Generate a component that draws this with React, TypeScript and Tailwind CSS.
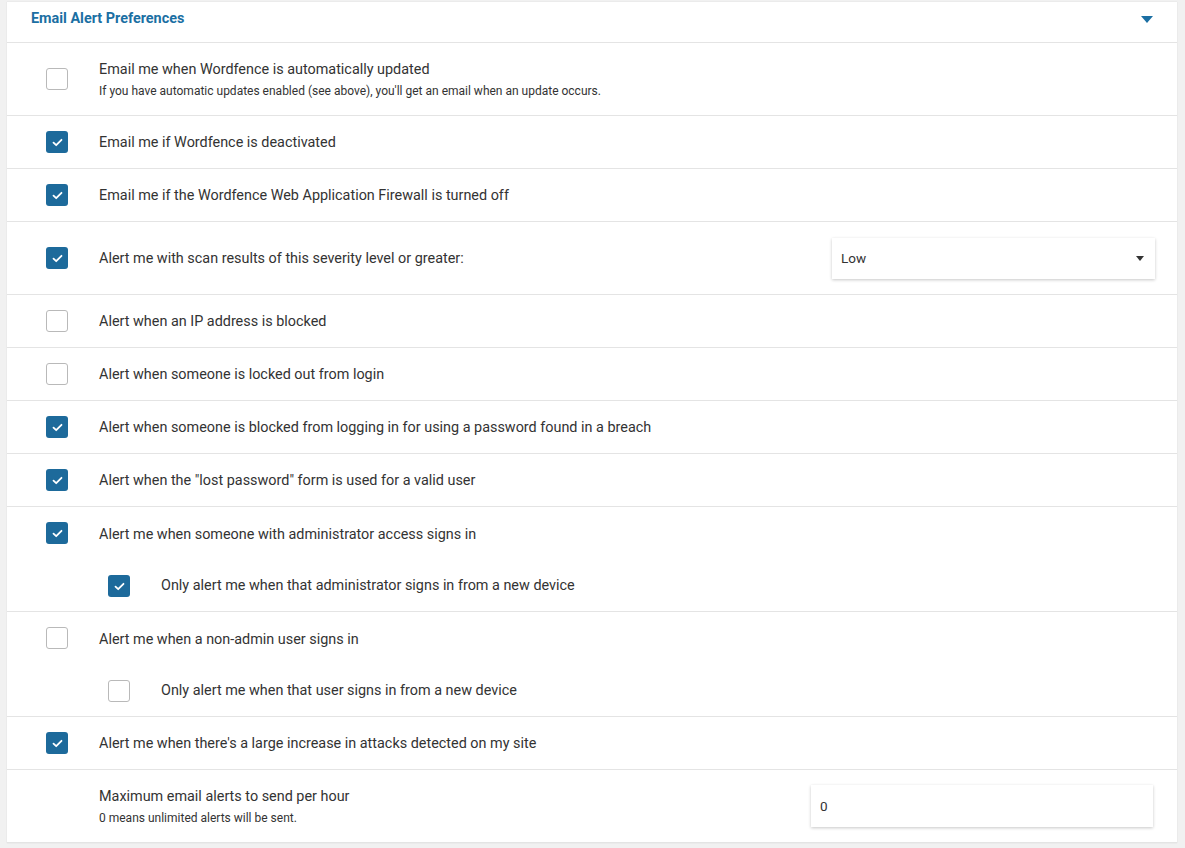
import React from "react";

type Row = {
  label: string;
  hint?: string;
  checked?: boolean;
  noBox?: boolean;
  control?: "select" | "input";
  sub?: { label: string; checked: boolean };
};

const rows: Row[] = [
  {
    label: "Email me when Wordfence is automatically updated",
    hint: "If you have automatic updates enabled (see above), you'll get an email when an update occurs.",
    checked: false,
  },
  { label: "Email me if Wordfence is deactivated", checked: true },
  { label: "Email me if the Wordfence Web Application Firewall is turned off", checked: true },
  { label: "Alert me with scan results of this severity level or greater:", checked: true, control: "select" },
  { label: "Alert when an IP address is blocked", checked: false },
  { label: "Alert when someone is locked out from login", checked: false },
  { label: "Alert when someone is blocked from logging in for using a password found in a breach", checked: true },
  { label: 'Alert when the "lost password" form is used for a valid user', checked: true },
  {
    label: "Alert me when someone with administrator access signs in",
    checked: true,
    sub: { label: "Only alert me when that administrator signs in from a new device", checked: true },
  },
  {
    label: "Alert me when a non-admin user signs in",
    checked: false,
    sub: { label: "Only alert me when that user signs in from a new device", checked: false },
  },
  { label: "Alert me when there's a large increase in attacks detected on my site", checked: true },
  {
    label: "Maximum email alerts to send per hour",
    hint: "0 means unlimited alerts will be sent.",
    noBox: true,
    control: "input",
  },
];

function Box({ checked }: { checked: boolean }) {
  return checked ? (
    <span className="flex h-[22px] w-[22px] shrink-0 items-center justify-center rounded-[3px] bg-[#1d6a9b]">
      <svg width="11" height="9" viewBox="0 0 11 9" fill="none">
        <path d="M1.5 4.6 L4.2 7.2 L9.5 1.8" stroke="#fff" strokeWidth="1.8" strokeLinecap="round" strokeLinejoin="round" />
      </svg>
    </span>
  ) : (
    <span className="block h-[22px] w-[22px] shrink-0 rounded-[3px] border border-[#b9b9b9] bg-white" />
  );
}

function OptionRow({ row }: { row: Row }) {
  const tall = !!row.hint || !!row.control;
  const textPad = row.hint ? "" : row.sub ? "pt-[4px]" : "pt-[2px]";
  return (
    <div className="border-b border-[#e4e4e4]">
      <div className={`flex items-center ${tall ? "h-[72px]" : "h-[52px]"}`}>
        <div className="flex w-[92px] shrink-0 pl-[39px]">{!row.noBox && <Box checked={!!row.checked} />}</div>
        <div className={`flex min-w-0 flex-1 flex-col ${textPad}`}>
          <span className="text-[14.4px] leading-[20px] text-[#333]">{row.label}</span>
          {row.hint && <span className="mt-[3px] text-[12px] leading-[16px] text-[#333]">{row.hint}</span>}
        </div>
        {row.control === "select" && (
          <div className="mr-[22px] flex h-[41px] w-[323px] items-center justify-between bg-white pl-[9px] pr-[11px] text-[13.5px] text-[#333] shadow-[0_1px_3px_rgba(0,0,0,0.22)]">
            <span>Low</span>
            <svg width="8" height="5" viewBox="0 0 8 5">
              <path d="M0 0 H8 L4 5 Z" fill="#333" />
            </svg>
          </div>
        )}
        {row.control === "input" && (
          <div className="mr-[24px] flex h-[42px] w-[342px] items-center bg-white pl-[9px] text-[13.5px] text-[#333] shadow-[0_1px_3px_rgba(0,0,0,0.22)]">
            0
          </div>
        )}
      </div>
      {row.sub && (
        <div className="-mt-[1px] flex h-[53px] items-center pt-[3px]">
          <div className="flex w-[154px] shrink-0 pl-[101px]">
            <Box checked={row.sub.checked} />
          </div>
          <span className="text-[14.4px] leading-[20px] text-[#333]">{row.sub.label}</span>
        </div>
      )}
    </div>
  );
}

export default function App() {
  return (
    <div
      className="min-h-[848px] bg-[#f1f1f1] pl-[7px] pr-[8px] pt-[2px]"
      style={{ fontFamily: "Roboto, 'Noto Sans', Arial, sans-serif" }}
    >
      <div className="bg-white shadow-[0_0_1px_rgba(0,0,0,0.15)]">
        <div className="flex h-[41px] items-center justify-between border-b border-[#e4e4e4] pl-[24px] pr-[24px]">
          <span className="-mt-[6px] text-[14.4px] font-bold text-[#1b6fa3]">Email Alert Preferences</span>
          <svg width="12" height="7" viewBox="0 0 12 7" className="-mt-[6px]">
            <path d="M0 0 H12 L6 7 Z" fill="#1b6fa3" />
          </svg>
        </div>
        {rows.map((r, i) => (
          <OptionRow key={i} row={r} />
        ))}
      </div>
    </div>
  );
}
